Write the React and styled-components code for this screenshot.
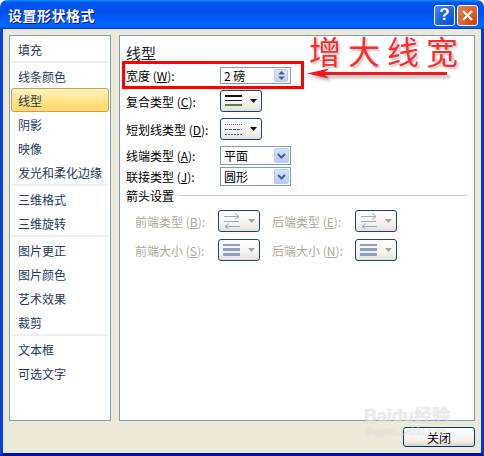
import React from "react";
import styled, { createGlobalStyle } from "styled-components";

const GlobalStyle = createGlobalStyle`
  html, body {
    margin: 0;
    padding: 0;
    background: #fff;
  }
  body {
    font-family: "Noto Sans CJK SC", "Liberation Sans", sans-serif;
    font-size: 12px;
  }
`;

const groups = [
  ["填充"],
  ["线条颜色", "线型", "阴影", "映像", "发光和柔化边缘"],
  ["三维格式", "三维旋转"],
  ["图片更正", "图片颜色", "艺术效果", "裁剪"],
  ["文本框", "可选文字"],
];

const CompoundIcon = () => (
  <svg width="18" height="14" viewBox="0 0 18 14">
    <rect x="0" y="1" width="17" height="2" fill="#111" />
    <rect x="0" y="6" width="17" height="1" fill="#222" />
    <rect x="0" y="10" width="17" height="2" fill="#5f7a66" />
  </svg>
);

const DashIcon = () => (
  <svg width="18" height="14" viewBox="0 0 18 14">
    <line x1="0" y1="2.5" x2="17" y2="2.5" stroke="#3b5fc4" strokeDasharray="1 1" />
    <line x1="0" y1="7.5" x2="17" y2="7.5" stroke="#3b5fc4" strokeDasharray="3 1" />
    <line x1="0" y1="12.5" x2="17" y2="12.5" stroke="#3b5fc4" strokeDasharray="2 1" />
  </svg>
);

const ArrowsIcon = () => (
  <svg width="18" height="16" viewBox="0 0 18 16">
    <g stroke="#97a8cc" strokeWidth="1" fill="none">
      <line x1="1" y1="3.5" x2="16" y2="3.5" />
      <polyline points="12,0.5 16,3.5 12,6.5" />
      <line x1="1" y1="8.5" x2="16" y2="8.5" />
      <line x1="2" y1="13.5" x2="17" y2="13.5" />
      <polyline points="6,10.5 2,13.5 6,16.5" />
    </g>
  </svg>
);

const SizeIcon = () => (
  <svg width="18" height="14" viewBox="0 0 18 14">
    <rect x="0" y="1" width="17" height="2" fill="#8e9fc6" />
    <rect x="0" y="5" width="17" height="3" fill="#8e9fc6" />
    <rect x="0" y="10" width="17" height="3" fill="#8e9fc6" />
  </svg>
);

const Caret = ({ color }) => (
  <svg width="7" height="4" viewBox="0 0 7 4">
    <polygon points="0,0 7,0 3.5,4" fill={color} />
  </svg>
);

const Chevron = () => (
  <svg width="9" height="6" viewBox="0 0 9 6">
    <polyline points="1,1 4.5,4.5 8,1" fill="none" stroke="#4d6185" strokeWidth="2" />
  </svg>
);

const DropButton = ({ icon, disabled }) => (
  <IconButton>
    {icon}
    <Caret color={disabled ? "#a3a3a3" : "#111"} />
  </IconButton>
);

const Select = ({ value }) => (
  <SelectBox>
    <span>{value}</span>
    <SelectArrow>
      <Chevron />
    </SelectArrow>
  </SelectBox>
);

const App = () => {
  return (
    <>
      <GlobalStyle />
      <Window>
        <TitleBar>
          <Title>设置形状格式</Title>
          <TitleButtons>
            <CaptionButton>?</CaptionButton>
            <CaptionButton $close>
              <svg width="11" height="11" viewBox="0 0 11 11">
                <path d="M1 1 L10 10 M10 1 L1 10" stroke="#fff" strokeWidth="2.4" />
              </svg>
            </CaptionButton>
          </TitleButtons>
        </TitleBar>

        <Frame>
          <Panels>
            <NavList>
              {groups.map((group, gi) => (
                <React.Fragment key={gi}>
                  {gi > 0 && <NavSeparator />}
                  {group.map((name) => (
                    <NavItem key={name} $active={name === "线型"}>
                      {name}
                    </NavItem>
                  ))}
                </React.Fragment>
              ))}
            </NavList>

            <Content>
              <Heading>线型</Heading>

              <HighlightRow>
                <Label>
                  宽度 (<u>W</u>):
                </Label>
                <SpinBox>
                  <span>2 磅</span>
                  <Spinner>
                    <svg width="7" height="9" viewBox="0 0 7 9">
                      <polygon points="0,3.5 3.5,0 7,3.5" fill="#4d6185" />
                      <polygon points="0,5.5 3.5,9 7,5.5" fill="#4d6185" />
                    </svg>
                  </Spinner>
                </SpinBox>
              </HighlightRow>

              <Row $h={24}>
                <Label>
                  复合类型 (<u>C</u>):
                </Label>
                <DropButton icon={<CompoundIcon />} />
              </Row>
              <Row $h={24} $mt={4}>
                <Label>
                  短划线类型 (<u>D</u>):
                </Label>
                <DropButton icon={<DashIcon />} />
              </Row>
              <Row $h={21} $mt={4}>
                <Label>
                  线端类型 (<u>A</u>):
                </Label>
                <Select value="平面" />
              </Row>
              <Row $h={21}>
                <Label>
                  联接类型 (<u>J</u>):
                </Label>
                <Select value="圆形" />
              </Row>

              <SectionTitle>
                <span>箭头设置</span>
                <SectionLine />
              </SectionTitle>

              <ArrowRow $mt={6}>
                <DimLabel>
                  前端类型 (<u>B</u>):
                </DimLabel>
                <DropButton icon={<ArrowsIcon />} disabled />
                <DimLabel $second>
                  后端类型 (<u>E</u>):
                </DimLabel>
                <DropButton icon={<ArrowsIcon />} disabled />
              </ArrowRow>
              <ArrowRow $mt={5}>
                <DimLabel>
                  前端大小 (<u>S</u>):
                </DimLabel>
                <DropButton icon={<SizeIcon />} disabled />
                <DimLabel $second>
                  后端大小 (<u>N</u>):
                </DimLabel>
                <DropButton icon={<SizeIcon />} disabled />
              </ArrowRow>
            </Content>
          </Panels>

          <Footer>
            <PushButton>关闭</PushButton>
          </Footer>
        </Frame>

        <Callout>增大线宽</Callout>
        <CalloutArrow width="150" height="20" viewBox="0 0 150 20">
          <defs>
            <filter id="sh" x="-10%" y="-50%" width="130%" height="250%">
              <feGaussianBlur stdDeviation="1.5" />
            </filter>
          </defs>
          <g transform="translate(3,3)" filter="url(#sh)" fill="#8a8a8a" opacity="0.6">
            <rect x="18" y="7" width="124" height="3" />
            <polygon points="2,8.5 24,3.5 18,8.5 24,13.5" />
          </g>
          <rect x="18" y="7" width="124" height="3" fill="#f01818" />
          <polygon points="2,8.5 24,3.5 18,8.5 24,13.5" fill="#f01818" />
        </CalloutArrow>

        <Watermark>
          <WatermarkMain>Baidu经验</WatermarkMain>
          <WatermarkSub>jingyan.baidu.com</WatermarkSub>
        </Watermark>
      </Window>
    </>
  );
};

export default App;

const Window = styled.div`
  position: relative;
  width: 484px;
  height: 456px;
  display: flex;
  flex-direction: column;
  overflow: hidden;
`;

const TitleBar = styled.div`
  height: 29px;
  flex: none;
  display: flex;
  align-items: center;
  justify-content: space-between;
  padding: 0 6px 0 8px;
  border-radius: 7px 7px 0 0;
  background: linear-gradient(
    180deg,
    #0997ff,
    #0053ee 8%,
    #0050ee 40%,
    #0066ff 88%,
    #0066ff 93%,
    #005bff 95%,
    #003dd7 96%,
    #003dd7
  );
`;

const Title = styled.div`
  color: #fff;
  font-size: 14px;
  font-weight: bold;
  letter-spacing: 0.5px;
  text-shadow: 1px 1px #0f1089;
`;

const TitleButtons = styled.div`
  display: flex;
  gap: 2px;
  margin-top: 1px;
`;

const CaptionButton = styled.div`
  width: 21px;
  height: 21px;
  box-sizing: border-box;
  border: 1px solid #fff;
  border-radius: 3px;
  display: flex;
  align-items: center;
  justify-content: center;
  color: #fff;
  font-family: "Liberation Sans", sans-serif;
  font-size: 17px;
  font-weight: bold;
  background: ${(p) =>
    p.$close
      ? "radial-gradient(circle at 90% 90%, #cc4600 0%, #dc6527 55%, #e5805a 100%)"
      : "radial-gradient(circle at 90% 90%, #0054e9 0%, #2263d5 55%, #4d8ef8 100%)"};
`;

const Frame = styled.div`
  flex: 1;
  display: flex;
  flex-direction: column;
  background: #ece9d8;
  border-left: 3px solid #0841d9;
  border-right: 3px solid #0738c9;
  border-bottom: 3px solid #00139a;
  padding: 6px 6px 6px;
  min-height: 0;
`;

const Panels = styled.div`
  flex: 1;
  display: flex;
  gap: 8px;
  min-height: 0;
`;

const NavList = styled.div`
  width: 102px;
  box-sizing: border-box;
  flex: none;
  background: #fff;
  border: 1px solid #7f9db9;
  padding: 1px;
  display: flex;
  flex-direction: column;
`;

const NavItem = styled.div`
  height: 24px;
  box-sizing: border-box;
  display: flex;
  align-items: center;
  padding-left: 6px;
  color: #1e395b;
  font-size: 12px;
  border: 1px solid ${(p) => (p.$active ? "#c9a04f" : "transparent")};
  border-radius: 3px;
  background: ${(p) =>
    p.$active ? "linear-gradient(180deg, #fff3c4 0%, #ffe690 45%, #ffd869 100%)" : "transparent"};
`;

const NavSeparator = styled.div`
  height: 2px;
  background: #eeeff4;
  margin: 0 0 1px;
`;

const Content = styled.div`
  flex: 1;
  background: #fff;
  border: 1px solid #7f9db9;
  padding: 5px 7px 0 6px;
  display: flex;
  flex-direction: column;
`;

const Heading = styled.div`
  height: 20px;
  line-height: 24px;
  font-size: 15px;
  color: #222;
`;

const Row = styled.div`
  height: ${(p) => p.$h}px;
  margin-top: ${(p) => p.$mt || 0}px;
  display: flex;
  align-items: center;
`;

const HighlightRow = styled.div`
  width: 182px;
  height: 28px;
  box-sizing: border-box;
  margin-left: -4px;
  padding-left: 1px;
  border: 3px solid #ff0000;
  display: flex;
  align-items: center;
`;

const Label = styled.div`
  width: 94px;
  flex: none;
  color: #000;
  font-size: 12px;
  white-space: nowrap;
`;

const ArrowRow = styled.div`
  height: 24px;
  margin-top: ${(p) => p.$mt}px;
  padding-left: 9px;
  display: flex;
  align-items: center;
`;

const DimLabel = styled.div`
  width: 83px;
  flex: none;
  margin-left: ${(p) => (p.$second ? "12px" : "0")};
  color: #aca899;
  font-size: 12px;
  white-space: nowrap;
`;

const SpinBox = styled.div`
  width: 71px;
  height: 17px;
  box-sizing: border-box;
  border: 1px solid #7f9db9;
  background: #fff;
  display: flex;
  align-items: center;
  justify-content: space-between;
  padding: 0 2px 0 3px;
  font-size: 12px;
  color: #000;
`;

const Spinner = styled.div`
  width: 14px;
  height: 13px;
  box-sizing: border-box;
  border: 1px solid #b3c6ef;
  border-radius: 2px;
  background: linear-gradient(180deg, #dce6fc 0%, #c3d4f8 100%);
  display: flex;
  align-items: center;
  justify-content: center;
`;

const IconButton = styled.div`
  width: 42px;
  height: 22px;
  box-sizing: border-box;
  border: 1px solid #1f4272;
  border-radius: 3px;
  background: linear-gradient(180deg, #ffffff 0%, #f5f4ef 60%, #e3e0d6 100%);
  display: flex;
  align-items: center;
  gap: 7px;
  padding-left: 4px;
  flex: none;
`;

const SelectBox = styled.div`
  width: 71px;
  height: 19px;
  box-sizing: border-box;
  border: 1px solid #7f9db9;
  background: #fff;
  display: flex;
  align-items: center;
  justify-content: space-between;
  padding: 0 1px 0 3px;
  font-size: 12px;
  color: #000;
`;

const SelectArrow = styled.div`
  width: 15px;
  height: 15px;
  box-sizing: border-box;
  border: 1px solid #bacdf4;
  border-radius: 2px;
  background: linear-gradient(180deg, #d4e0fb 0%, #b8cbf5 100%);
  display: flex;
  align-items: center;
  justify-content: center;
`;

const SectionTitle = styled.div`
  height: 16px;
  display: flex;
  align-items: center;
  font-size: 12px;
  color: #000;
`;

const SectionLine = styled.div`
  flex: 1;
  height: 1px;
  margin-left: 4px;
  background: #d0d0bf;
`;

const Footer = styled.div`
  height: 20px;
  margin-top: 6px;
  display: flex;
  justify-content: flex-end;
  flex: none;
`;

const PushButton = styled.div`
  width: 72px;
  height: 20px;
  box-sizing: border-box;
  border: 1px solid #003c74;
  border-radius: 3px;
  background: linear-gradient(180deg, #ffffff 0%, #f3f2ec 70%, #d8d3c7 100%);
  display: flex;
  align-items: center;
  justify-content: center;
  font-size: 12px;
  color: #000;
`;

const Callout = styled.div`
  position: absolute;
  left: 309px;
  top: 28px;
  font-size: 32px;
  line-height: 44px;
  letter-spacing: 7px;
  color: #ff2b2b;
  font-family: "Noto Sans CJK SC", sans-serif;
  text-shadow: 2px 2px 2px rgba(0, 0, 0, 0.2);
  white-space: nowrap;
`;

const CalloutArrow = styled.svg`
  position: absolute;
  left: 305px;
  top: 65px;
`;

const Watermark = styled.div`
  position: absolute;
  left: 364px;
  top: 406px;
  display: flex;
  flex-direction: column;
  pointer-events: none;
  color: rgba(255, 255, 255, 0.55);
  text-shadow: 0 0 1px rgba(120, 120, 120, 0.35);
  font-family: "Liberation Sans", "Noto Sans CJK SC", sans-serif;
`;

const WatermarkMain = styled.div`
  font-size: 18px;
  font-weight: bold;
  line-height: 20px;
`;

const WatermarkSub = styled.div`
  font-size: 10px;
  line-height: 12px;
  margin-left: 2px;
`;
